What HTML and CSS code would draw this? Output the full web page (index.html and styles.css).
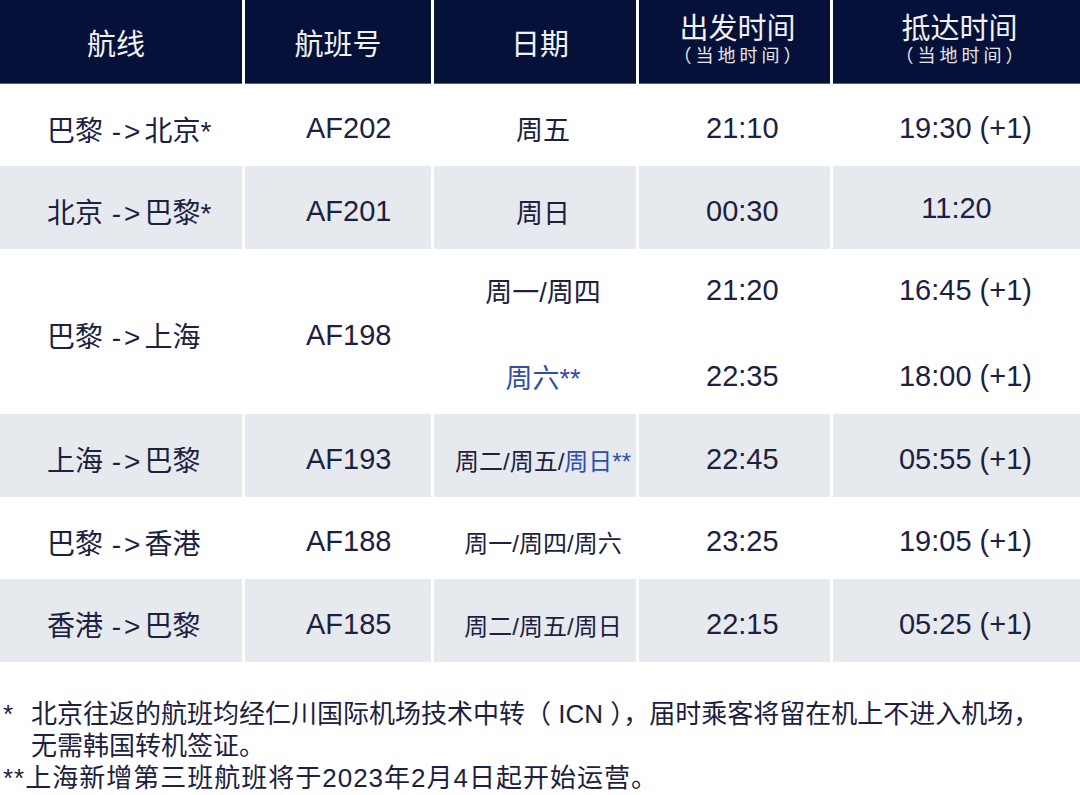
FILE: index.html
```html
<!DOCTYPE html>
<html lang="zh-CN">
<head>
<meta charset="utf-8">
<title>航班时刻</title>
<link rel="stylesheet" href="styles.css">
</head>
<body>
<div class="sched">
  <div class="hd hd-route">航线</div>
  <div class="hd">航班号</div>
  <div class="hd hd-day">日期</div>
  <div class="hd two hd-time"><span class="main">出发时间</span><span class="sub">（当地时间）</span></div>
  <div class="hd two hd-time"><span class="main">抵达时间</span><span class="sub">（当地时间）</span></div>

  <div class="c route"><span>巴黎 <span class="arrow">-&gt;</span>北京*</span></div>
  <div class="c fl">AF202</div>
  <div class="c day">周五</div>
  <div class="c dep">21:10</div>
  <div class="c arr">19:30 (+1)</div>

  <div class="c alt route"><span>北京 <span class="arrow">-&gt;</span>巴黎*</span></div>
  <div class="c alt fl">AF201</div>
  <div class="c alt day">周日</div>
  <div class="c alt dep">00:30</div>
  <div class="c alt arr arr-short">11:20</div>

  <div class="c route span2"><span>巴黎 <span class="arrow">-&gt;</span>上海</span></div>
  <div class="c fl span2">AF198</div>
  <div class="c day top">周一/周四</div>
  <div class="c dep top">21:20</div>
  <div class="c arr top">16:45 (+1)</div>
  <div class="c day blue">周六**</div>
  <div class="c dep">22:35</div>
  <div class="c arr">18:00 (+1)</div>

  <div class="c alt route"><span>上海 <span class="arrow">-&gt;</span>巴黎</span></div>
  <div class="c alt fl">AF193</div>
  <div class="c alt day small"><span>周二/周五/<span class="blue">周日**</span></span></div>
  <div class="c alt dep">22:45</div>
  <div class="c alt arr">05:55 (+1)</div>

  <div class="c route"><span>巴黎 <span class="arrow">-&gt;</span>香港</span></div>
  <div class="c fl">AF188</div>
  <div class="c day small">周一/周四/周六</div>
  <div class="c dep">23:25</div>
  <div class="c arr">19:05 (+1)</div>

  <div class="c alt route"><span>香港 <span class="arrow">-&gt;</span>巴黎</span></div>
  <div class="c alt fl">AF185</div>
  <div class="c alt day small">周二/周五/周日</div>
  <div class="c alt dep">22:15</div>
  <div class="c alt arr">05:25 (+1)</div>
</div>

<div class="notes">
  <div class="note">
    <span class="mark">*</span>
    <span class="note-text">北京往返的航班均经仁川国际机场技术中转（ ICN ），届时乘客将留在机上不进入机场，<br>无需韩国转机签证。</span>
  </div>
  <div class="note-plain">**上海新增第三班航班将于2023年2月4日起开始运营。</div>
</div>
</body>
</html>
```

FILE: styles.css
```css
html, body {
  margin: 0;
  padding: 0;
  background: #ffffff;
}

body {
  width: 1080px;
  height: 795px;
  overflow: hidden;
  font-family: "Liberation Sans", "Noto Sans CJK SC", sans-serif;
  color: #1c2142;
}

.sched {
  display: grid;
  grid-template-columns: 242px 186px 202px 191px 1fr;
  grid-template-rows: 84px 82px 83px 82px 83px 83px 82px 83px;
  column-gap: 3px;
}

.hd {
  background: #061139;
  color: #f1f2f6;
  font-size: 29px;
  display: flex;
  align-items: center;
  justify-content: center;
  border-bottom: 1px solid #5a6178;
  box-sizing: border-box;
}

.hd-route {
  padding-right: 10px;
}

.hd-day {
  padding-left: 10px;
}

.hd-time {
  padding-left: 6px;
}

.hd.two {
  flex-direction: column;
}

.hd .main {
  line-height: 28px;
}

.hd .sub {
  font-size: 18px;
  line-height: 26px;
  letter-spacing: 4px;
  padding-left: 4px;
  color: #e4e6ee;
}

.c {
  display: flex;
  align-items: center;
  font-size: 29px;
  padding-top: 7px;
  box-sizing: border-box;
  white-space: nowrap;
}

.c.top {
  padding-top: 0;
}

.alt {
  background: #e6eaee;
}

.span2 {
  grid-row: span 2;
}

.route {
  padding-left: 47px;
  font-size: 28px;
}

.arrow {
  margin-left: 1px;
  margin-right: 1px;
  letter-spacing: 3px;
}

.fl {
  padding-left: 61px;
}

.day {
  justify-content: center;
  padding-left: 16px;
  font-size: 27px;
}

.day.small {
  font-size: 24px;
}

.dep {
  padding-left: 67px;
}

.arr {
  justify-content: center;
  padding-left: 18px;
}

.arr.arr-short {
  padding-left: 0;
  padding-top: 2px;
}

.blue {
  color: #2d4fb2;
}

.notes {
  margin-top: 36px;
  font-size: 26px;
  line-height: 32px;
}

.note {
  display: flex;
}

.mark {
  width: 31px;
  padding-left: 3px;
  box-sizing: border-box;
  flex: none;
}

.note-plain {
  padding-left: 3px;
  letter-spacing: 1px;
}
```
